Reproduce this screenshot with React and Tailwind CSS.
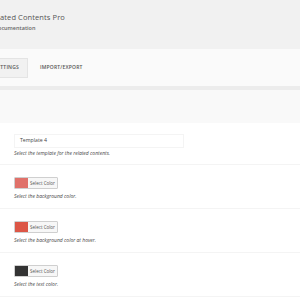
export default function App() {
  const rows = [
    { color: "bg-[#e0716a]", text: "Select the background color." },
    { color: "bg-[#dc5646]", text: "Select the background color at hover." },
    { color: "bg-[#333333]", text: "Select the text color." },
  ];

  return (
    <div className="w-[300px] h-[300px] overflow-hidden bg-white font-['Open_Sans',sans-serif] text-[#444]">
      {/* header */}
      <div className="h-[49px] bg-[#f1f1f1] pt-[11px]">
        <div className="-ml-[11px] text-[7.5px] leading-[12px] text-[#555] tracking-[0.1px]">Related Contents Pro</div>
        <div className="-ml-[6px] mt-[2px] text-[5.5px] leading-[7px] font-semibold text-[#666]">Documentation</div>
      </div>

      {/* tabs */}
      <div className="h-[37px] bg-[#fafafa] flex items-center gap-[12px]">
        <div className="h-[20px] w-[28px] bg-[#f1f1f1] border border-l-0 border-[#e4e4e4] flex items-center justify-end pr-[8px] text-[5px] font-semibold tracking-[0.2px] text-[#555] overflow-hidden whitespace-nowrap">
          <span>SETTINGS</span>
        </div>
        <div className="text-[5px] font-semibold tracking-[0.2px] text-[#555]">IMPORT/EXPORT</div>
      </div>
      <div className="h-[4px] bg-[#ececec]" />
      <div className="h-[33px] bg-[#f9f9f9]" />

      {/* template */}
      <div className="px-[14px] pt-[11px] h-[42px] border-b border-[#f4f4f4]">
        <div className="w-[170px] h-[14px] border border-[#f4f4f4] flex items-center pl-[5px] text-[5.2px] text-[#444]">
          Template 4
        </div>
        <div className="mt-[2px] text-[5px] italic text-[#444] whitespace-nowrap">
          Select the template for the related contents.
        </div>
      </div>

      {rows.map((r) => (
        <div key={r.text} className="px-[14px] pt-[12px] h-[44px] border-b border-[#f4f4f4]">
          <div className="flex w-[44px] h-[12px] border border-[#cfcfcf] rounded-[1px] overflow-hidden bg-[#f7f7f7]">
            <div className={"w-[13px] h-full " + r.color} />
            <div className="flex-1 flex items-center justify-center text-[4.5px] text-[#555] whitespace-nowrap">Select Color</div>
          </div>
          <div className="mt-[4px] text-[5px] italic text-[#444] whitespace-nowrap">{r.text}</div>
        </div>
      ))}
    </div>
  );
}
